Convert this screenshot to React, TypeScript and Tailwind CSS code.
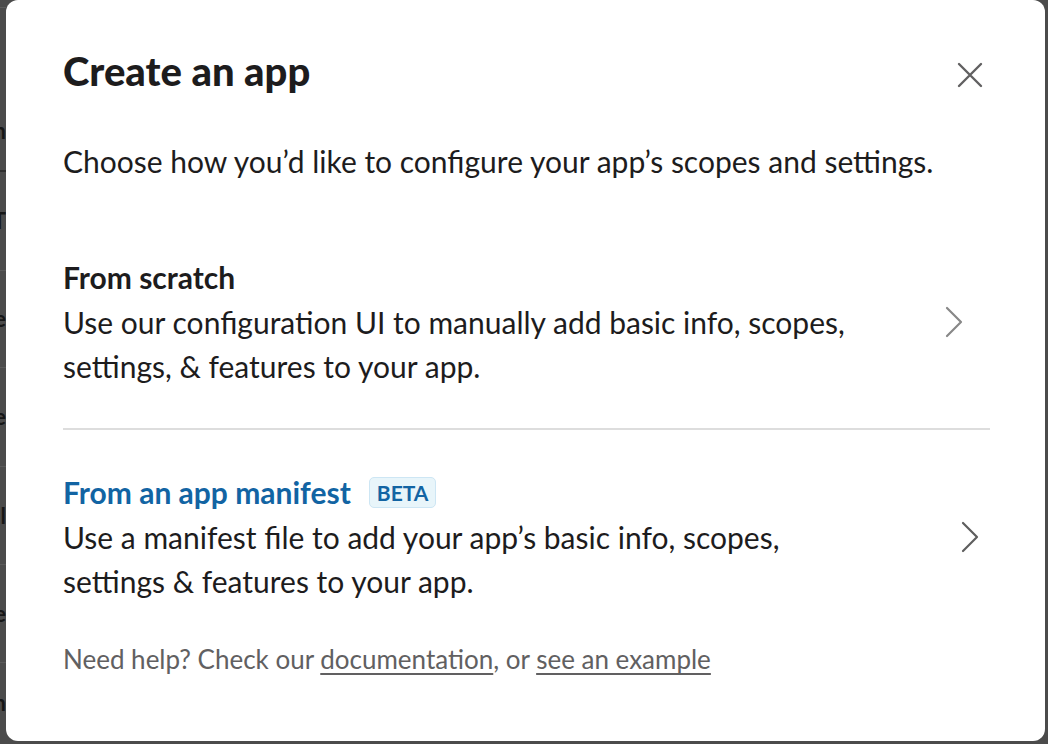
function CloseIcon() {
  return (
    <svg width="26" height="26" viewBox="0 0 26 26" fill="none" aria-hidden="true">
      <path d="M2 2L24 24M24 2L2 24" stroke="#616061" strokeWidth="2.4" strokeLinecap="round" />
    </svg>
  );
}

function Chevron({ color }: { color: string }) {
  return (
    <svg width="18" height="32" viewBox="0 0 18 32" fill="none" aria-hidden="true">
      <path d="M2 2L16 16L2 30" stroke={color} strokeWidth="2.2" strokeLinecap="round" strokeLinejoin="round" />
    </svg>
  );
}

const stripRows = [
  { h: 'h-[8px]', letter: '', line: 'border-[#5d5d5d]' },
  { h: 'h-[164px]', letter: 'n', line: 'border-[#2f2f2f] border-b-2', pos: 'items-end pb-[28px]' },
  { h: 'h-[99px]', letter: 'T', line: 'border-[#5a5a5a]' },
  { h: 'h-[97px]', letter: 'e', line: 'border-[#5a5a5a]' },
  { h: 'h-[99px]', letter: 'e', line: 'border-[#5a5a5a]' },
  { h: 'h-[98px]', letter: 'l', line: 'border-[#5a5a5a]' },
  { h: 'h-[98px]', letter: 'e', line: 'border-[#5a5a5a]' },
  { h: 'h-[81px]', letter: 'n', line: 'border-transparent' },
];

export default function App() {
  return (
    <div className="flex h-[744px] w-[1048px] overflow-hidden bg-[#4b4b4b] font-[Lato,sans-serif]">
      <div className="flex w-[6px] shrink-0 flex-col overflow-hidden">
        {stripRows.map((row, index) => (
          <div
            key={index}
            className={[
              'flex shrink-0 justify-end overflow-hidden border-b text-[22px] font-bold leading-none text-[#161616]',
              row.h,
              row.line,
              row.pos ?? 'items-center',
            ].join(' ')}
          >
            {row.letter && <span className="shrink-0">{row.letter}</span>}
          </div>
        ))}
      </div>

      <div className="flex h-[741px] w-[1039px] shrink-0 flex-col rounded-[12px] bg-white pl-[57px] pr-[55px] text-[#1d1c1d]">
        <div className="flex items-start justify-between pt-[47px]">
          <h1 className="text-[40px] font-black leading-[48px] text-[#1d1c1d]">Create an app</h1>
          <button type="button" className="mt-[8px] flex h-[40px] w-[40px] items-center justify-center">
            <CloseIcon />
          </button>
        </div>

        <p className="mt-[44px] text-[30px] leading-[44px]">
          Choose how you’d like to configure your app’s scopes and settings.
        </p>

        <div className="mt-[72px] flex items-center justify-between">
          <div className="w-[800px] leading-[44px]">
            <div className="text-[30px] font-bold">From scratch</div>
            <div className="mt-[1px] text-[30px]">
              Use our configuration UI to manually add basic info, scopes, settings, &amp; features to your app.
            </div>
          </div>
          <div className="mr-[27px]">
            <Chevron color="#888888" />
          </div>
        </div>

        <div className="mt-[40px] h-[2px] bg-[#dddddd]" />

        <div className="mt-[40px] flex items-center justify-between">
          <div className="w-[800px] leading-[44px]">
            <div className="flex items-center gap-[18px]">
              <span className="text-[30px] font-bold text-[#1264a3]">From an app manifest</span>
              <span className="rounded-[5px] border border-[#cde6f4] bg-[#e8f5fa] px-[7px] text-[21px] font-bold leading-[29px] text-[#1264a3]">
                BETA
              </span>
            </div>
            <div className="mt-[1px] text-[30px]">
              Use a manifest file to add your app’s basic info, scopes, settings &amp; features to your app.
            </div>
          </div>
          <div className="mr-[11px]">
            <Chevron color="#5e5e5e" />
          </div>
        </div>

        <p className="mt-[38px] text-[26px] leading-[36px] text-[#616061]">
          Need help? Check our{' '}
          <a href="#" className="underline underline-offset-[4px]">
            documentation
          </a>
          , or{' '}
          <a href="#" className="underline underline-offset-[4px]">
            see an example
          </a>
        </p>
      </div>

      <div className="w-[3px] shrink-0 bg-[#4b4b4b]" />
    </div>
  );
}
